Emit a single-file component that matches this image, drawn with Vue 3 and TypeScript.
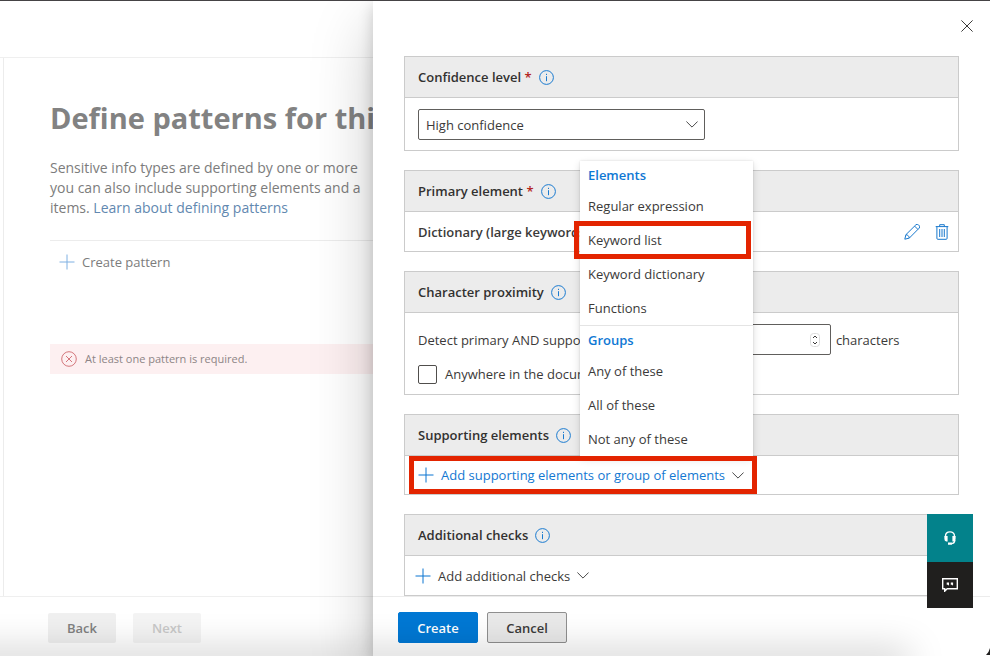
<script setup lang="ts">
import { ref } from 'vue'

const confidence = ref('High confidence')
const distance = ref(300)
const anywhere = ref(false)

interface MenuGroup {
  title: string
  items: string[]
}

const highlighted = 'Keyword list'
const menu: MenuGroup[] = [
  { title: 'Elements', items: ['Regular expression', 'Keyword list', 'Keyword dictionary', 'Functions'] },
  { title: 'Groups', items: ['Any of these', 'All of these', 'Not any of these'] },
]
</script>

<template>
  <div class="shell">
    <main class="wizard">
      <div class="topbar"></div>
      <section class="step">
        <h1>Define patterns for this</h1>
        <p class="intro">
          Sensitive info types are defined by one or more<br />
          you can also include supporting elements and a<br />
          items. <a href="#">Learn about defining patterns</a>
        </p>
        <div class="toolbar">
          <button type="button" class="command">
            <svg class="plus" viewBox="0 0 16 16"><path d="M8 .5v15M.5 8h15" /></svg>
            Create pattern
          </button>
        </div>
        <div class="error" role="alert">
          <svg viewBox="0 0 16 16"><circle cx="8" cy="8" r="7.3" /><path d="M5 5l6 6M11 5l-6 6" /></svg>
          At least one pattern is required.
        </div>
      </section>
      <footer class="wizard-footer">
        <button type="button">Back</button>
        <button type="button" disabled>Next</button>
      </footer>
    </main>

    <aside class="drawer">
      <header class="drawer-head">
        <button type="button" class="icon-button" aria-label="Close">
          <svg class="close" viewBox="0 0 12 12"><path d="M.4.4l11.2 11.2M11.6.4L.4 11.6" /></svg>
        </button>
      </header>

      <div class="drawer-body">
        <section class="card">
          <h2>
            <label for="confidence">Confidence level <em>*</em></label>
            <svg class="info" viewBox="0 0 15 15"><circle cx="7.5" cy="7.5" r="6.9" /><path d="M7.5 6.2v5M7.5 3.8v1.2" /></svg>
          </h2>
          <div class="card-body">
            <div class="select">
              <select id="confidence" v-model="confidence">
                <option>High confidence</option>
              </select>
              <svg class="chevron" viewBox="0 0 12 7"><path d="M.4.5L6 6.1 11.6.5" /></svg>
            </div>
          </div>
        </section>

        <section class="card">
          <h2>
            <span>Primary element <em>*</em></span>
            <svg class="info" viewBox="0 0 15 15"><circle cx="7.5" cy="7.5" r="6.9" /><path d="M7.5 6.2v5M7.5 3.8v1.2" /></svg>
          </h2>
          <div class="row element">
            <strong>Dictionary (large keywords)</strong>
            <span class="actions">
              <button type="button" class="icon-button" aria-label="Edit">
                <svg class="glyph" viewBox="0 0 16 16">
                  <path d="M.8 15.2l1.1-4.5L11.8.9a1.9 1.9 0 0 1 2.7 0l.6.6a1.9 1.9 0 0 1 0 2.7L5.3 14.1zM10.6 2.1l3.3 3.3M1.9 10.7c1.8.1 3.3 1.5 3.4 3.4" />
                </svg>
              </button>
              <button type="button" class="icon-button" aria-label="Delete">
                <svg class="glyph" viewBox="0 0 16 16">
                  <path d="M1.7 2.6h12.6M5.7 2.5V.7h4.6v1.8M2.9 2.7v11.6q0 1 1 1h8.2q1 0 1-1V2.7M5.7 5v8M8 5v8M10.3 5v8" />
                </svg>
              </button>
            </span>
          </div>
        </section>

        <section class="card">
          <h2>
            <span>Character proximity</span>
            <svg class="info" viewBox="0 0 15 15"><circle cx="7.5" cy="7.5" r="6.9" /><path d="M7.5 6.2v5M7.5 3.8v1.2" /></svg>
          </h2>
          <div class="card-body stack">
            <div class="distance">
              <label for="distance">Detect primary AND supporting elements within</label>
              <span class="number">
                <input id="distance" v-model="distance" type="number" />
                <svg viewBox="0 0 10 14">
                  <rect x=".5" y=".5" width="9" height="13" rx="3" />
                  <path d="M3 5l2-2 2 2M3 9l2 2 2-2" />
                </svg>
              </span>
              <span>characters</span>
            </div>
            <label class="check">
              <input v-model="anywhere" type="checkbox" />
              Anywhere in the document
            </label>
          </div>
        </section>

        <section class="card">
          <h2>
            <span>Supporting elements</span>
            <svg class="info" viewBox="0 0 15 15"><circle cx="7.5" cy="7.5" r="6.9" /><path d="M7.5 6.2v5M7.5 3.8v1.2" /></svg>
          </h2>
          <div class="row supporting">
            <button type="button" class="command marked">
              <svg class="plus" viewBox="0 0 16 16"><path d="M8 .5v15M.5 8h15" /></svg>
              Add supporting elements or group of elements
              <svg class="chevron" viewBox="0 0 12 7"><path d="M.4.5L6 6.1 11.6.5" /></svg>
            </button>
            <div class="menu" role="menu">
              <div v-for="group in menu" :key="group.title" class="menu-group">
                <h3>{{ group.title }}</h3>
                <button
                  v-for="item in group.items"
                  :key="item"
                  type="button"
                  role="menuitem"
                  :class="{ outlined: item === highlighted }"
                >
                  {{ item }}
                </button>
              </div>
            </div>
          </div>
        </section>

        <section class="card">
          <h2>
            <span>Additional checks</span>
            <svg class="info" viewBox="0 0 15 15"><circle cx="7.5" cy="7.5" r="6.9" /><path d="M7.5 6.2v5M7.5 3.8v1.2" /></svg>
          </h2>
          <div class="row">
            <button type="button" class="command">
              <svg class="plus" viewBox="0 0 16 16"><path d="M8 .5v15M.5 8h15" /></svg>
              Add additional checks
              <svg class="chevron" viewBox="0 0 12 7"><path d="M.4.5L6 6.1 11.6.5" /></svg>
            </button>
          </div>
        </section>
      </div>

      <footer class="drawer-footer">
        <button type="button" class="primary">Create</button>
        <button type="button">Cancel</button>
      </footer>

      <div class="help">
        <button type="button" aria-label="Support">
          <svg class="headset" viewBox="0 0 12 14">
            <path class="line" d="M1.5 6.5V5.2C1.500 2.600 3.400.9 6 .9s4.500 1.700 4.500 4.300v1.300M10.800 9c0 2.200-1.300 3.500-3.600 3.600" />
            <path class="fill" d="M.4 5.100h3.200v5.400H2.300Q.4 10.100.4 8zM11.600 5.100H8.400v5.400h1.300q1.900-.4 1.900-2.500zM4 11.500h3.900v2.300H4z" />
          </svg>
        </button>
        <button type="button" aria-label="Feedback">
          <svg class="feedback" viewBox="0 0 16 14">
            <path class="line" d="M.7.7h14.6v10H5.2L2.7 13.2v-2.5h-2z" />
            <path class="fill" d="M4.7 4.5h2.3v2.3l-1 .9v-1H4.7zM8.8 4.5h2.3v2.3l-1 .9v-1H8.8z" />
          </svg>
        </button>
      </div>
    </aside>
    <div class="bottom-shade"></div>
    <svg class="corner" viewBox="0 0 5 9"><path d="M5 0v9H0Q3.500 6 5 0z" /></svg>
  </div>
</template>

<style>
body {
  margin: 0;
}
</style>

<style scoped>
.shell {
  position: relative;
  display: flex;
  height: 100vh;
  box-sizing: border-box;
  overflow: hidden;
  border-top: 1px solid #454345;
  background: #fff;
  color: #3b3a39;
  font-family: 'Open Sans', 'Noto Sans', sans-serif;
  font-size: 13px;
  line-height: 20px;
}

button,
input,
select {
  font: inherit;
  color: inherit;
}

button {
  padding: 0;
  border: 0;
  background: none;
}

svg {
  flex: none;
  fill: none;
  stroke: currentColor;
}

h1,
h2,
h3,
p {
  margin: 0;
}

/* Dimmed wizard behind the drawer */
.wizard {
  flex: 0 0 373px;
  display: flex;
  flex-direction: column;
  min-width: 0;
  overflow: hidden;
  white-space: nowrap;
  color: #7c7c7c;
}

.topbar {
  flex: 0 0 56px;
  border-bottom: 1px solid #efefef;
}

.step {
  flex: 1;
  margin-left: 3px;
  padding: 37px 0 0 46px;
  border-left: 1px solid #ececec;
}

h1 {
  color: #828282;
  font-size: 29px;
  line-height: 46px;
  font-weight: 700;
}

.intro {
  margin-top: 17px;
  font-size: 14px;
  line-height: 20px;
}

.intro a {
  color: #6288b0;
  text-decoration: none;
}

.toolbar {
  display: flex;
  margin-top: 22px;
  padding: 11px 9px;
  border-top: 1px solid #ececec;
}

.error {
  display: flex;
  align-items: center;
  gap: 8px;
  height: 30px;
  margin-top: 61px;
  padding-left: 11px;
  background: #fdf0f1;
  color: #8d8586;
  font-size: 11px;
}

.error svg {
  width: 16px;
  height: 16px;
  color: #d4777c;
}

.wizard-footer {
  display: flex;
  gap: 17px;
  height: 60px;
  box-sizing: border-box;
  padding: 16px 48px 0;
  border-top: 1px solid #efefef;
}

.wizard-footer button {
  width: 68px;
  height: 30px;
  border-radius: 2px;
  background: #f0f0f0;
  color: #818181;
  font-weight: 600;
}

.wizard-footer button:disabled {
  background: #f4f4f4;
  color: #c8c8c8;
}

.command {
  display: flex;
  align-items: center;
  gap: 7px;
  white-space: nowrap;
}

.plus {
  width: 16px;
  height: 16px;
  color: #0b74d1;
}

.wizard .plus {
  color: #7fb0e2;
}

.chevron {
  width: 12px;
  height: 7px;
  color: #4a4a4a;
}

/* Drawer */
.drawer {
  position: relative;
  z-index: 1;
  flex: 1;
  display: flex;
  flex-direction: column;
  min-width: 0;
  background: #fff;
  box-shadow: 0 26px 58px rgba(0, 0, 0, 0.22), 0 5px 14px rgba(0, 0, 0, 0.18);
}

.drawer-head {
  display: flex;
  justify-content: flex-end;
  padding: 17px 15px 14px;
}

.icon-button {
  display: grid;
  place-items: center;
  width: 16px;
  height: 16px;
}

.close {
  width: 12px;
  height: 12px;
}

.drawer-body {
  flex: 1;
  display: flex;
  flex-direction: column;
  gap: 19px;
  min-height: 0;
  padding: 8px 31px 0;
}

.card {
  border: 1px solid #cbcbcb;
}

.card h2 {
  display: flex;
  align-items: center;
  gap: 7px;
  height: 40px;
  padding: 0 13px;
  border-bottom: 1px solid #cbcbcb;
  background: #ececec;
  color: #323130;
  font-size: 13px;
  font-weight: 600;
  white-space: nowrap;
}

.card em {
  color: #b3261e;
  font-style: normal;
}

.info {
  width: 15px;
  height: 15px;
  color: #1b7bd0;
}

.card-body {
  padding: 11px 13px 10px;
}

.row {
  display: flex;
  align-items: center;
  height: 39px;
  padding: 0 10px;
}

.element {
  justify-content: space-between;
  padding: 0 8px 0 13px;
}

.element strong {
  font-weight: 600;
}

.actions {
  display: flex;
  gap: 14px;
}

.glyph {
  width: 16px;
  height: 16px;
  color: #1878cd;
}

.select {
  position: relative;
  width: 287px;
}

.select select {
  display: block;
  width: 100%;
  height: 31px;
  padding: 0 32px 0 7px;
  border: 1px solid #605e5c;
  border-radius: 2px;
  background: #fff;
  appearance: none;
}

.select .chevron {
  position: absolute;
  top: 12px;
  right: 7px;
  pointer-events: none;
}

.stack {
  display: flex;
  flex-direction: column;
  gap: 9px;
}

.distance {
  display: flex;
  align-items: center;
  gap: 5px;
  white-space: nowrap;
}

.number {
  position: relative;
}

.number input {
  display: block;
  width: 117px;
  height: 31px;
  box-sizing: border-box;
  padding: 0 26px 0 8px;
  border: 1px solid #605e5c;
  border-radius: 2px;
  appearance: textfield;
}

.number svg {
  position: absolute;
  top: 9px;
  right: 11px;
  width: 10px;
  height: 14px;
}

.number rect {
  stroke: #dcdcdc;
}

.check {
  display: flex;
  align-items: center;
  gap: 8px;
  height: 20px;
}

.check input {
  width: 19px;
  height: 19px;
  margin: 0;
  box-sizing: border-box;
  border: 1px solid #504e4c;
  border-radius: 2px;
  appearance: none;
}

/* Supporting elements and its open menu */
.supporting {
  position: relative;
  height: 38px;
  padding: 0 4px;
}

.marked {
  z-index: 3;
  height: 38px;
  box-sizing: border-box;
  padding: 0 8px 0 4px;
  border: 5px solid #e32400;
  color: #1378d2;
}

.menu {
  position: absolute;
  z-index: 2;
  left: 175px;
  bottom: 38px;
  width: 173px;
  background: #fff;
  box-shadow: 0 3px 8px rgba(0, 0, 0, 0.14), 0 0 2px rgba(0, 0, 0, 0.12);
}

.menu-group + .menu-group {
  border-top: 1px solid #e4e4e4;
}

.menu h3 {
  padding: 0 8px;
  color: #0f78d4;
  font-size: 13px;
  line-height: 28px;
  font-weight: 600;
}

.menu button {
  position: relative;
  display: block;
  width: 100%;
  height: 34px;
  padding: 0 8px;
  text-align: left;
}

.outlined::after {
  content: '';
  position: absolute;
  inset: -2px 2px -2px -6px;
  border: 5px solid #e32400;
}

.drawer-footer {
  display: flex;
  gap: 9px;
  height: 60px;
  box-sizing: border-box;
  padding: 15px 25px 0;
  border-top: 1px solid #ececec;
}

.drawer-footer button {
  width: 80px;
  height: 31px;
  box-sizing: border-box;
  border: 1px solid #8f8f8f;
  border-radius: 2px;
  background: #e9e9e9;
  font-weight: 600;
}

.drawer-footer .primary {
  border-color: #0078d4;
  background: #0078d4;
  color: #fff;
}

/* Floating help buttons */
.help {
  position: absolute;
  right: 17px;
  bottom: 48px;
  z-index: 4;
  display: flex;
  flex-direction: column;
}

.help button {
  display: grid;
  place-items: center;
  width: 46px;
  height: 46px;
  background: #201f1e;
  color: #fff;
}

.help button:first-child {
  height: 48px;
  background: #03828b;
}

.headset {
  width: 12px;
  height: 14px;
}

.feedback {
  width: 16px;
  height: 14px;
}

.help .line {
  stroke-width: 1.4;
}

.help .fill {
  fill: currentColor;
  stroke: none;
}

/* Window edge shading */
.bottom-shade {
  position: absolute;
  z-index: 5;
  left: -40px;
  right: 85px;
  bottom: -10px;
  height: 10px;
  box-shadow: 0 0 36px 4px rgba(0, 0, 0, 0.25);
  pointer-events: none;
}

.corner {
  position: absolute;
  z-index: 5;
  right: 0;
  bottom: 0;
  width: 4px;
  height: 9px;
  fill: #201f1e;
  stroke: none;
}
</style>
